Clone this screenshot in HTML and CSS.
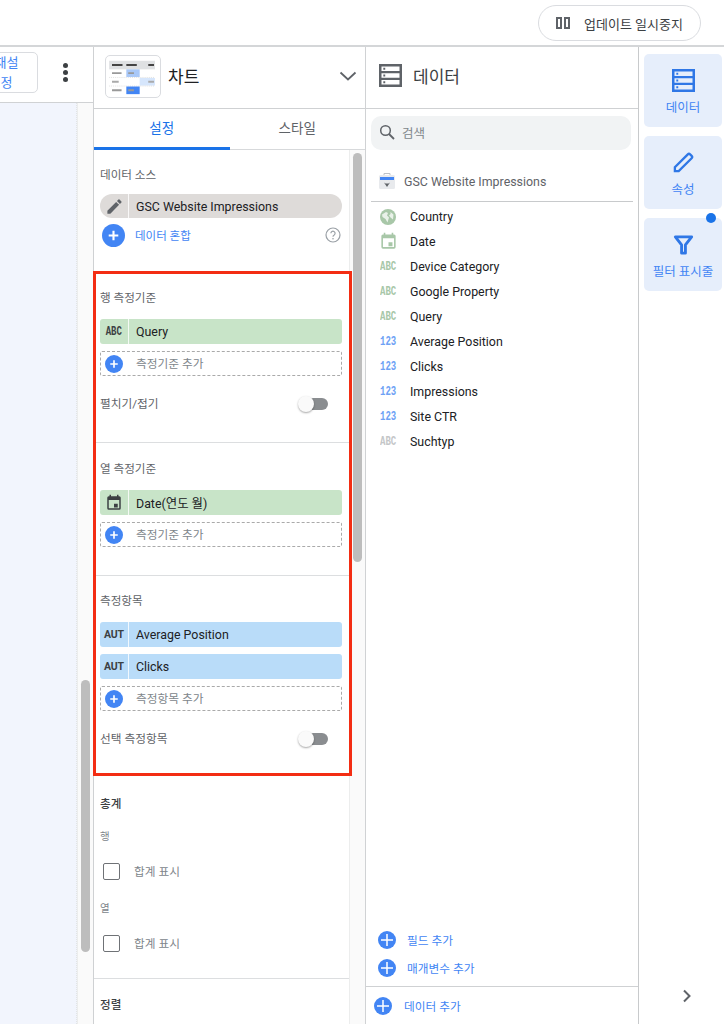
FILE: index.html
```html
<!DOCTYPE html>
<html lang="ko">
<head>
<meta charset="utf-8">
<title>차트 설정</title>
<link rel="stylesheet" href="styles.css">
</head>
<body>
<svg class="defs" width="0" height="0">
  <symbol id="plus" viewBox="0 0 24 24"><circle cx="12" cy="12" r="12" fill="#4285f4"/><path d="M12 7v10M7 12h10" stroke="#fff" stroke-width="2.2"/></symbol>
  <symbol id="plusbig" viewBox="0 0 24 24"><circle cx="12" cy="12" r="12" fill="#4285f4"/><path d="M12 4v16M4 12h16" stroke="#fff" stroke-width="2"/></symbol>
  <symbol id="store" viewBox="0 0 24 24"><path fill="currentColor" fill-rule="evenodd" d="M0 0h24v24H0zM2.600 2.600v4.800h18.800V2.600zM2.600 9.600v4.800h18.800V9.600zM2.600 16.600v4.800h18.800v-4.800z"/><path fill="currentColor" d="M4.500 4h2v2h-2zM4.500 11h2v2h-2zM4.500 18h2v2h-2z"/></symbol>
  <symbol id="cal" viewBox="0 0 24 24"><path fill="currentColor" fill-rule="evenodd" d="M19 3h-1V1h-2v2H8V1H6v2H5a2 2 0 0 0-2 2v14a2 2 0 0 0 2 2h14a2 2 0 0 0 2-2V5a2 2 0 0 0-2-2zm0 16H5V8h14zM12 13h5v5h-5z"/></symbol>
</svg>

<div class="app">
  <header class="topbar">
    <button class="pause">
      <svg class="pause-icon" viewBox="0 0 14 12"><path d="M1 1h4v10H1zM9 1h4v10H9z" fill="none" stroke="#5f6368" stroke-width="2"/></svg>
      <span>업데이트 일시중지</span>
    </button>
  </header>

  <main class="main">
    <section class="left">
      <div class="left-head">
        <div class="reset">재설<br>정</div>
        <div class="kebab"><i></i><i></i><i></i></div>
      </div>
      <div class="left-body">
        <div class="canvas"></div>
        <div class="track track-left"><div class="thumb thumb-left"></div></div>
      </div>
    </section>

    <section class="chart">
      <div class="chart-head">
        <div class="thumbnail">
          <svg viewBox="0 0 56 43" width="54" height="41">
            <rect x="3" y="5" width="48" height="9" fill="#dfe1e3"/>
            <path d="M6 9.500h11M21 9.500h11M44 9.500h6" stroke="#444" stroke-width="2.200"/>
            <rect x="21" y="14" width="14" height="8" fill="#a9c8f8"/>
            <path d="M6 18h10M23 18h6" stroke="#999" stroke-width="2"/>
            <rect x="35" y="23" width="16" height="8" fill="#d6e6fc"/>
            <path d="M6 27h7M44 27h6" stroke="#aaa" stroke-width="2"/>
            <path d="M3 22.500h48M3 31.500h48" stroke="#ccc" stroke-width=".6" stroke-dasharray="1 1"/>
            <rect x="21" y="32" width="14" height="8" fill="#4285f4"/>
            <path d="M6 36h10M23 36h6" stroke="#999" stroke-width="2"/>
          </svg>
        </div>
        <div class="chart-title">차트</div>
        <svg class="chev" viewBox="0 0 18 10"><path d="M1.500 1.500 9 8.500l7.500-7" fill="none" stroke="#5f6368" stroke-width="1.800"/></svg>
      </div>
      <div class="tabs">
        <div class="tab tab-on">설정</div>
        <div class="tab">스타일</div>
      </div>
      <div class="chart-body">
        <div class="form">
          <div class="sect sect-source">
            <div class="label">데이터 소스</div>
            <div class="chip chip-grey">
              <span class="chip-ic"><svg width="19" height="19" viewBox="0 0 24 24"><path fill="#5f6368" d="M3 17.250V21h3.750L17.810 9.940l-3.750-3.750zM20.710 7.040a1 1 0 0 0 0-1.410l-2.340-2.340a1 1 0 0 0-1.410 0l-1.830 1.830 3.750 3.750z"/></svg></span>
              <span class="chip-tx">GSC Website Impressions</span>
            </div>
            <div class="blend">
              <svg class="blend-plus"><use href="#plus"/></svg>
              <span class="link">데이터 혼합</span>
              <svg class="help" viewBox="0 0 16 16"><circle cx="8" cy="8" r="7" fill="none" stroke="#9aa0a6" stroke-width="1.200"/><path d="M5.900 6.300a2.100 2.100 0 1 1 3.300 1.700c-.8.500-1.200.9-1.200 1.700" fill="none" stroke="#9aa0a6" stroke-width="1.200"/><circle cx="8" cy="11.800" r=".8" fill="#9aa0a6"/></svg>
            </div>
          </div>

          <div class="sect sect-row">
            <div class="label">행 측정기준</div>
            <div class="chip chip-green"><span class="chip-ic"><span class="mono">ABC</span></span><span class="chip-tx">Query</span></div>
            <div class="add"><svg class="add-plus"><use href="#plus"/></svg><span>측정기준 추가</span></div>
            <div class="toggle-row"><span>펼치기/접기</span><span class="toggle"></span></div>
          </div>

          <div class="sect sect-col">
            <div class="label">열 측정기준</div>
            <div class="chip chip-green"><span class="chip-ic"><svg class="chip-cal"><use href="#cal"/></svg></span><span class="chip-tx">Date(연도 월)</span></div>
            <div class="add"><svg class="add-plus"><use href="#plus"/></svg><span>측정기준 추가</span></div>
          </div>

          <div class="sect sect-metric">
            <div class="label">측정항목</div>
            <div class="chip chip-blue"><span class="chip-ic"><span class="aut">AUT</span></span><span class="chip-tx">Average Position</span></div>
            <div class="chip chip-blue"><span class="chip-ic"><span class="aut">AUT</span></span><span class="chip-tx">Clicks</span></div>
            <div class="add"><svg class="add-plus"><use href="#plus"/></svg><span>측정항목 추가</span></div>
            <div class="toggle-row"><span>선택 측정항목</span><span class="toggle"></span></div>
          </div>

          <div class="sect sect-total">
            <div class="label label-dark">총계</div>
            <div class="sub">행</div>
            <div class="check"><span class="box"></span><span>합계 표시</span></div>
            <div class="sub">열</div>
            <div class="check"><span class="box"></span><span>합계 표시</span></div>
          </div>

          <div class="sect sect-sort">
            <div class="label label-dark">정렬</div>
          </div>
        </div>
        <div class="track"><div class="thumb thumb-chart"></div></div>
        <div class="red-frame"></div>
      </div>
    </section>

    <section class="data">
      <div class="data-head">
        <svg class="data-ic"><use href="#store"/></svg>
        <div class="data-title">데이터</div>
      </div>
      <div class="search">
        <svg width="16" height="16" viewBox="0 0 16 16"><circle cx="6.500" cy="6.500" r="4.800" fill="none" stroke="#5f6368" stroke-width="1.500"/><path d="m10 10 5 5" stroke="#5f6368" stroke-width="1.800"/></svg>
        <span>검색</span>
      </div>
      <div class="source">
        <svg width="18" height="18" viewBox="0 0 18 18"><path d="M6 3.500V1.500h6v2" fill="none" stroke="#bdc1c6"/><rect x="1" y="3" width="16" height="14" rx="1.500" fill="#e8eaed"/><rect x="2" y="5" width="14" height="3" fill="#4285f4"/><path d="M6 10.500 9 15l3-4.500-1.500 1H7.500z" fill="#5f6368"/></svg>
        <span>GSC Website Impressions</span>
      </div>
      <ul class="fields">
        <li><svg class="f-ic f-geo" viewBox="0 0 16 16"><circle cx="8" cy="8" r="8" fill="#a8c7a8"/><path d="M2 5.500 6 3l2 1-1 2.500 2 2-1.500 5L5.500 10 2.500 8zM10.500 3l3 2.500-.5 5-2.500-2-1.500-2 1.500-1.500z" fill="#fff" opacity=".75"/></svg><span>Country</span></li>
        <li><svg class="f-ic f-cal"><use href="#cal"/></svg><span>Date</span></li>
        <li><span class="f-tag green">ABC</span><span>Device Category</span></li>
        <li><span class="f-tag green">ABC</span><span>Google Property</span></li>
        <li><span class="f-tag green">ABC</span><span>Query</span></li>
        <li><span class="f-tag blue">123</span><span>Average Position</span></li>
        <li><span class="f-tag blue">123</span><span>Clicks</span></li>
        <li><span class="f-tag blue">123</span><span>Impressions</span></li>
        <li><span class="f-tag blue">123</span><span>Site CTR</span></li>
        <li><span class="f-tag grey">ABC</span><span>Suchtyp</span></li>
      </ul>
      <div class="data-actions">
        <div class="act"><svg class="act-ic"><use href="#plusbig"/></svg><span>필드 추가</span></div>
        <div class="act"><svg class="act-ic"><use href="#plusbig"/></svg><span>매개변수 추가</span></div>
      </div>
      <div class="data-foot">
        <svg class="act-ic foot-ic"><use href="#plusbig"/></svg><span>데이터 추가</span>
      </div>
    </section>

    <aside class="rail">
      <div class="rail-card">
        <svg class="rail-ic"><use href="#store"/></svg>
        <span>데이터</span>
      </div>
      <div class="rail-card">
        <svg class="rail-ic" viewBox="0 0 24 24"><path fill="none" stroke="currentColor" stroke-width="2.400" d="M3 21v-4L16.500 3.500a1.700 1.700 0 0 1 2.400 0l1.600 1.600a1.700 1.700 0 0 1 0 2.400L7 21z"/></svg>
        <span>속성</span>
      </div>
      <div class="rail-card rail-filter">
        <i class="dot"></i>
        <svg class="rail-ic" viewBox="0 0 24 24"><path fill="none" stroke="currentColor" stroke-width="3" d="M3.500 4h17L14 12.500V21h-4v-8.500z" stroke-linejoin="round"/></svg>
        <span>필터 표시줄</span>
      </div>
      <svg class="rail-arrow" viewBox="0 0 10 14"><path d="m2 1.500 5.500 5.500L2 12.500" fill="none" stroke="#5f6368" stroke-width="2"/></svg>
    </aside>
  </main>
</div>
</body>
</html>
```
FILE: styles.css
```css
* { box-sizing: border-box; }
html, body { margin: 0; padding: 0; }
body {
  width: 724px;
  height: 1024px;
  overflow: hidden;
  background: #fff;
  font-family: Roboto, "Noto Sans CJK KR", sans-serif;
  font-size: 12px;
  color: #202124;
}
.defs { position: absolute; }
.app { display: flex; flex-direction: column; height: 1024px; }

/* top bar */
.topbar {
  height: 47px;
  border-bottom: 2px solid #d4d6d8;
  display: flex;
  justify-content: flex-end;
  align-items: flex-start;
  padding: 5px 23px 0 0;
}
.pause {
  width: 163px;
  height: 36px;
  border: 1px solid #dadce0;
  border-radius: 18px;
  background: #fff;
  display: flex;
  align-items: center;
  padding: 0 0 0 17px;
  font: 13px Roboto, "Noto Sans CJK KR", sans-serif;
  color: #3c4043;
}
.pause-icon { width: 14px; height: 12px; margin-right: 14px; }

/* columns */
.main { flex: 1; display: flex; min-height: 0; }
.left { width: 94px; border-right: 1px solid #cfd1d3; display: flex; flex-direction: column; overflow: hidden; flex: none; }
.left-head {
  height: 56px;
  border-bottom: 1px solid #d0d2d4;
  display: flex;
  align-items: flex-start;
  padding-top: 5px;
  flex: none;
}
.reset {
  width: 63px;
  height: 41px;
  margin-left: -25px;
  border: 1px solid #dadce0;
  border-radius: 5px;
  color: #4285f4;
  font-size: 13px;
  line-height: 20px;
  text-align: center;
  flex: none;
}
.kebab { margin: 11px 0 0 25px; width: 6px; display: flex; flex-direction: column; gap: 2px; flex: none; }
.kebab i { display: block; width: 5px; height: 5px; border-radius: 50%; background: #3c4043; }
.left-body { flex: 1; display: flex; min-height: 0; }
.canvas { width: 77px; background: #f2f5fd; border-right: 1px dotted #e2e4e6; }
.track { width: 16px; background: #fafafa; border-left: 1px solid #eceded; flex: none; }
.track-left { padding-left: 3px; }
.thumb { width: 9px; border-radius: 5px; background: #bdbdbd; }
.thumb-left { margin-top: 577px; height: 272px; }
.thumb-chart { margin: 3px 0 0 3px; height: 409px; }

/* chart panel */
.chart { width: 272px; border-right: 1px solid #d0d2d4; display: flex; flex-direction: column; flex: none; }
.chart-head { height: 62px; border-bottom: 1px solid #cfd1d3; display: flex; align-items: center; padding: 0 8px 4px 11px; flex: none; }
.thumbnail { width: 56px; height: 43px; border: 1px solid #dadce0; border-radius: 5px; overflow: hidden; align-self: flex-start; margin-top: 8px; }
.chart-title { font-size: 17px; margin-left: 7px; flex: 1; color: #202124; }
.chev { width: 18px; height: 10px; }
.tabs { height: 41px; display: flex; border-bottom: 1px solid #d7d9db; flex: none; }
.tab { flex: 1; height: 41px; text-align: center; line-height: 38px; font-size: 13.500px; color: #5f6368; }
.tab-on { color: #1a73e8; border-bottom: 3px solid #1a73e8; }
.chart-body { flex: 1; display: flex; min-height: 0; position: relative; }
.form { width: 255px; flex: none; overflow: hidden; }
.sect { padding: 0 7px 0 6px; border-bottom: 1px solid #dcdee0; }
.sect-source { height: 121px; padding-top: 16px; border-bottom: none; }
.sect-row { height: 172px; padding-top: 18px; }
.sect-col { height: 133px; padding-top: 17px; }
.sect-metric { height: 200px; padding-top: 16px; border-bottom: none; }
.sect-total { height: 203px; padding-top: 19px; }
.sect-sort { border-bottom: none; padding-top: 17px; }
.label { height: 16px; line-height: 18px; font-size: 11.600px; color: #5f6368; margin-bottom: 14px; }
.sect-source .label { margin-bottom: 12px; }
.label-dark { color: #3c4043; font-weight: 500; }
.chip { height: 25px; display: flex; align-items: center; border-radius: 3px; margin-bottom: 7px; }
.chip-ic { width: 29px; height: 100%; display: flex; align-items: center; justify-content: center; border-right: 1px solid rgba(255,255,255,.8); flex: none; }
.chip-tx { padding-left: 7px; font-size: 12.400px; color: #202124; }
.chip-grey { height: 24px; background: #dedbd9; border-radius: 12px; margin-bottom: 4px; }
.chip-green { background: #c8e4c8; }
.chip-blue { background: #b9dcf9; }
.mono { font: bold 12px "Liberation Mono", monospace; color: #3c4043; transform: scaleX(.75); }
.aut { font: bold 10.500px Roboto, sans-serif; color: #3c4043; letter-spacing: -.2px; }
.chip-cal { width: 18px; height: 18px; color: #3c4043; }
.blend { height: 26px; display: flex; align-items: center; padding-left: 2px; }
.blend-plus { width: 23px; height: 23px; }
.link { margin-left: 10px; color: #4285f4; font-size: 11.500px; flex: 1; }
.help { width: 16px; height: 16px; margin-right: 1px; }
.add { height: 25px; border: 1px dashed #aaa; border-radius: 2px; display: flex; align-items: center; padding-left: 4px; color: #80868b; font-size: 11.700px; }
.add span { margin-top: -2px; }
.add-plus { width: 18px; height: 18px; margin-right: 13px; }
.toggle-row { display: flex; align-items: center; justify-content: space-between; margin-top: 16px; height: 24px; font-size: 11.700px; color: #5f6368; padding-right: 14px; }
.toggle-row > span:first-child { margin-top: -3px; }
.toggle { width: 30px; height: 14px; position: relative; display: block; }
.toggle::before { content: ""; position: absolute; right: 0; top: 1px; width: 24px; height: 12px; border-radius: 6px; background: #8a8d90; }
.toggle::after { content: ""; position: absolute; left: 0; top: -1px; width: 16px; height: 16px; border-radius: 50%; background: #fafafa; box-shadow: 0 1px 2px rgba(0,0,0,.35); }
.sub { font-size: 10.500px; color: #80868b; height: 14px; line-height: 14px; }
.check { display: flex; align-items: center; height: 36px; margin: 9px 0 13px; padding-left: 3px; color: #80868b; font-size: 11.700px; }
.check span:last-child { margin-top: -2px; }
.box { width: 17px; height: 17px; border: 1.500px solid #6f7276; border-radius: 2px; margin-right: 14px; }
.sect-total .label { margin-bottom: 19px; }
.red-frame { position: absolute; left: -1px; top: 121px; width: 259px; height: 505px; border: 3px solid #f32d13; pointer-events: none; }

/* data panel */
.data { width: 273px; border-right: 1px solid #c8cacc; display: flex; flex-direction: column; flex: none; }
.data-head { height: 62px; border-bottom: 1px solid #cfd1d3; display: flex; align-items: center; padding: 0 0 4px 13px; flex: none; }
.data-ic { width: 23px; height: 23px; color: #5f6368; }
.data-title { font-size: 17px; margin-left: 11px; color: #3c4043; }
.search { margin: 7px 7px 0 5px; height: 34px; border-radius: 10px; background: #f1f3f4; display: flex; align-items: center; padding: 0 0 2px 8px; color: #80868b; font-size: 12.500px; gap: 7px; flex: none; }
.source { margin: 19px 5px 0 5px; height: 33px; border-bottom: 1px solid #c8cacc; display: flex; align-items: flex-start; padding: 3px 0 0 7px; color: #5f6368; gap: 8px; line-height: 19px; flex: none; font-size: 12.400px; }
.fields { list-style: none; margin: 2px 0 0; padding: 0 0 0 14px; flex: 1; }
.fields li { height: 25px; display: flex; align-items: center; font-size: 12.400px; color: #202124; }
.f-ic { width: 16px; height: 16px; margin-right: 14px; flex: none; }
.f-cal { width: 19px; height: 19px; margin: 0 12px 0 -1px; color: #a8c7a8; }
.f-tag { width: 16px; margin-right: 14px; font: bold 12px "Liberation Mono", monospace; white-space: nowrap; transform: scaleX(.75); transform-origin: left center; flex: none; }
.green { color: #a8c7a8; }
.blue { color: #6ea2f5; }
.grey { color: #c4c6c8; }
.data-actions { padding: 0 0 4px 12px; flex: none; }
.act { height: 28px; display: flex; align-items: center; color: #4285f4; font-size: 11.700px; }
.act span { margin-top: -2px; }
.act-ic { width: 18px; height: 18px; margin-right: 11px; flex: none; }
.data-foot { height: 38px; border-top: 1px solid #cfd1d3; display: flex; align-items: center; padding: 0 0 0 8px; color: #4285f4; font-size: 11.700px; flex: none; }
.foot-ic { margin-right: 12px; }

/* right rail */
.rail { flex: 1; display: flex; flex-direction: column; align-items: flex-start; padding: 7px 2px 0 5px; gap: 9px; }
.rail-card { width: 78px; height: 73px; border-radius: 5px; background: #e6eefb; color: #4285f4; display: flex; flex-direction: column; align-items: center; padding-top: 15px; font-size: 12.500px; line-height: 18px; position: relative; flex: none; }
.rail-ic { width: 23px; height: 23px; margin-bottom: 7px; color: #2f77e6; flex: none; }
.dot { position: absolute; right: 6px; top: -5px; width: 10px; height: 10px; border-radius: 50%; background: #1a73e8; }
.rail-arrow { width: 10px; height: 14px; margin: 689px 0 0 38px; }
```
